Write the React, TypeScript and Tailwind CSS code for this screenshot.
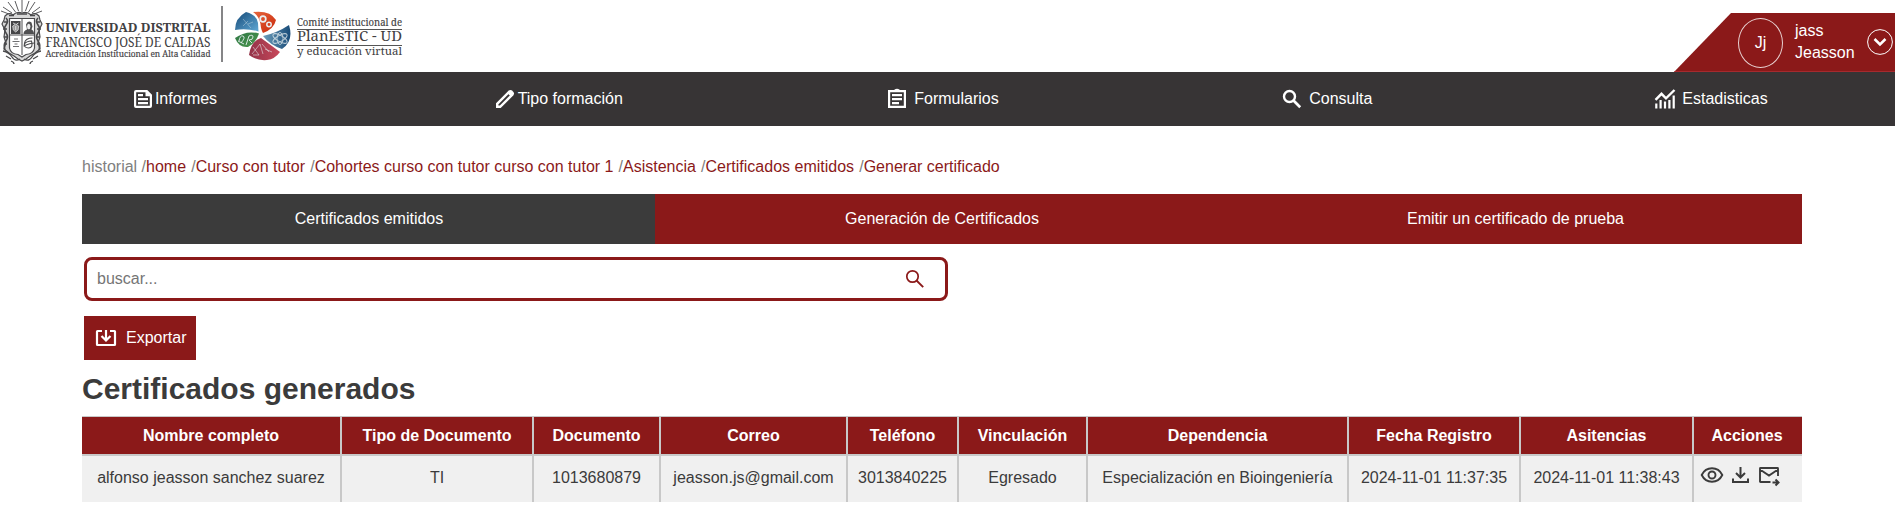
import React from 'react';

type IconProps = { className?: string; children: React.ReactNode };
const Icon = ({ className = 'size-6', children }: IconProps) => (
  <svg viewBox="0 0 24 24" className={`shrink-0 ${className}`} fill="none" stroke="currentColor" strokeWidth="2.2">
    {children}
  </svg>
);

const DocIcon = () => (
  <Icon><path d="M5 4.100h10.800l4.100 4.100V19a.9.9 0 0 1-.9.9H5a.9.9 0 0 1-.9-.9V5a.9.9 0 0 1 .9-.9zM7 8.100h5M7 12.100h10M7 16.100h10" /><path d="M14.500 4v5.200H20z" fill="currentColor" stroke="none" /></Icon>
);
const PencilIcon = () => (
  <Icon className="-ml-px mr-px size-6"><path d="M4.200 19.800v-3L16 5l3 3L7.200 19.800z" strokeWidth="2.400" /><path d="M14 5.700l2.500-2.400q1.300-.9 2.600.3l1.300 1.300q1.200 1.300.3 2.600L18.300 10z" fill="currentColor" stroke="none" /></Icon>
);
const ClipIcon = () => (
  <Icon className="-ml-px mr-px size-6"><path d="M4.100 4.100h15.800v15.800H4.100zM7 8.100h10M7 12.100h10M7 16.100h7" /><path d="M8.500 4.500a3.600 3.600 0 0 1 7 0z" fill="currentColor" stroke="none" /></Icon>
);
const SearchIcon = () => (
  <Icon className="-ml-px mr-px size-6"><circle cx="9.500" cy="9.500" r="5.500" strokeWidth="2.400" /><path d="M13.500 13.500l6.700 6.700" strokeWidth="2.700" /></Icon>
);
const ChartIcon = () => (
  <Icon className="-ml-px mr-px size-6"><path d="M3.300 21.500v-5M7.600 21.500v-8.500M12 21.500v-7M16.400 21.500v-8.500M20.700 21.500V8.500" strokeWidth="2.200" /><path d="M2.500 12.800l6-6 4.500 4.500L21.500 3" strokeWidth="2.400" /></Icon>
);

const nav = [
  { icon: <DocIcon />, label: 'Informes', gap: '' },
  { icon: <PencilIcon />, label: 'Tipo formación', gap: '' },
  { icon: <ClipIcon />, label: 'Formularios', gap: 'gap-1' },
  { icon: <SearchIcon />, label: 'Consulta', gap: 'gap-1' },
  { icon: <ChartIcon />, label: 'Estadisticas', gap: 'gap-1' },
];

const crumbs = ['home', 'Curso con tutor', 'Cohortes curso con tutor curso con tutor 1', 'Asistencia', 'Certificados emitidos', 'Generar certificado'];

const columns = [
  { title: 'Nombre completo', value: 'alfonso jeasson sanchez suarez' },
  { title: 'Tipo de Documento', value: 'TI' },
  { title: 'Documento', value: '1013680879' },
  { title: 'Correo', value: 'jeasson.js@gmail.com' },
  { title: 'Teléfono', value: '3013840225' },
  { title: 'Vinculación', value: 'Egresado' },
  { title: 'Dependencia', value: 'Especialización en Bioingeniería' },
  { title: 'Fecha Registro', value: '2024-11-01 11:37:35' },
  { title: 'Asitencias', value: '2024-11-01 11:38:43' },
];
const gridCols = 'grid grid-cols-[260px_192px_127px_187px_111px_129px_261px_172px_173px_108px]';

const Shield = () => (
  <svg viewBox="0 0 44 65" className="h-[65px] w-11 shrink-0" fill="none" stroke="#4a4a4c">
    <path d="M22 12V0M18.500 11L15 1M15.500 12L8 2M12 13L3 7M9 14L1 11M25.500 11L29 1M28.500 12L35 2M32 13L40 7M34 14L42 11" strokeWidth=".9" />
    <path d="M5 16q4-4 8-1q4-4 9-2q5-2 9 2q4-3 8 1l1 4 2 4-3 6 1 7-2 6 2 6-5 4-5 3-4 3-4 2-4-2-4-3-5-3-5-4 2-6-2-6 1-7-3-6 2-4z" strokeWidth="1.200" fill="#d8d8d8" />
    <path d="M6 18q3 3 0 7t0 8 0 8-1 9M38 18q-3 3 0 7t0 8 0 8 1 9M4 22h3M3 29h4M4 37h3M4 44h3M40 22h-3M41 29h-4M40 37h-3M40 44h-3M9 15.500h5M17 14h10M30 15.500h5" strokeWidth="1.600" />
    <path d="M9.500 18.500h25V48q-1 6-8.500 6.500l-4 2.500-4-2.500q-7.500-.5-8.500-6.500z" fill="#fff" strokeWidth="1.200" />
    <path d="M22 19v36M10 35h24" strokeWidth="1" />
    <path d="M11 21h9.500v13H11z" fill="#454547" stroke="none" />
    <path d="M15.700 24l3 2-.6 4-2.400 2-2.400-2-.6-4z" fill="#999" stroke="#ddd" strokeWidth=".8" />
    <path d="M13 23l2 1M18.500 23l-2 1M15.700 26v4" stroke="#eee" strokeWidth=".8" />
    <path d="M23.500 34q0-3.500 3.500-4.500l-1-5q2-5 5.500-2l1 4-1 3q2.500 1 2.500 4.500z" fill="#505052" stroke="none" />
    <ellipse cx="28.700" cy="26.500" rx="1.700" ry="2.700" fill="#eee" stroke="none" />
    <path d="M14 39h4M12.500 41.500h7M14.500 44h3M13 46.500h6" strokeWidth=".8" />
    <path d="M32.500 38q-7 0-8 5t4 5 3-7q-5 0-7.500 3.500M23.500 46q7-3 11-3" strokeWidth="1.100" />
    <path d="M3 51q6 1 9 6t8 2M41 51q-6 1-9 6t-8 2M6 56l5 3M38 56l-5 3M11 61q3 1 3 3M33 61q-3 1-3 3" strokeWidth="1.300" />
  </svg>
);

const PlanLogo = () => (
  <svg viewBox="0 0 58 50" className="h-[50px] w-[58px] shrink-0">
    <defs>
      <linearGradient id="blue" x2="1" y2="1"><stop stopColor="#164a78" /><stop offset="1" stopColor="#60a9d5" /></linearGradient>
      <linearGradient id="red" x2="1" y2="1"><stop stopColor="#e6673e" /><stop offset="1" stopColor="#c9290b" /></linearGradient>
      <linearGradient id="green" x2="1" y2="1"><stop stopColor="#2d7544" /><stop offset="1" stopColor="#4f9b50" /></linearGradient>
      <linearGradient id="wine" x2="1"><stop stopColor="#933348" /><stop offset="1" stopColor="#c8475a" /></linearGradient>
      <linearGradient id="navy" x2="1"><stop stopColor="#6d9ebb" /><stop offset="1" stopColor="#184b78" /></linearGradient>
    </defs>
    <path d="M12 1Q23 4 24 12L24.500 20.500Q13 17 1 19Q1 7 12 1z" fill="url(#blue)" />
    <path d="M19 1Q36-1 42 9Q40 18 29 22Q27 19 26.500 13Q25 5 19 1z" fill="url(#red)" />
    <path d="M1 27Q12 19 25 22.500Q22 32 14 36Q5 37 1 27z" fill="url(#green)" />
    <path d="M15 44Q17 30 27 27Q34 32 46 41Q41 48 33 49Q23 50 15 44z" fill="url(#wine)" />
    <path d="M29 25Q43 22 55 14Q60 30 48 38Q36 34 29 25z" fill="url(#navy)" />
    <g fill="none" stroke="#e9f0f2" strokeWidth=".9">
      <path d="M9 8l8 9M9 15l5-5M14 13l5-2" opacity=".4" />
      <circle cx="29" cy="8" r="2.800" strokeWidth="1.700" /><circle cx="35" cy="13.500" r="2.200" strokeWidth="1.500" />
      <path d="M5 30q1-6 4-5t-2 7M12 34l3-9q4-2 4 1t-4 3l3 3M4 30l6 3" />
      <path d="M18 43l8-10 3 10M28 33l7 8M19 36l6 8h-6M31 38l7 3" opacity=".6" />
      <g opacity=".75"><ellipse cx="46" cy="27.500" rx="8" ry="3" transform="rotate(30 46 27.500)" /><ellipse cx="46" cy="27.500" rx="8" ry="3" transform="rotate(-30 46 27.500)" /><ellipse cx="46" cy="27.500" rx="3" ry="6" /></g>
    </g>
  </svg>
);

const serif = "font-['Noto_Serif','DejaVu_Serif',serif]";

export default function App() {
  return (
    <div className="min-h-[510px] overflow-hidden bg-white font-['Liberation_Sans',Arial,sans-serif] text-base text-[#3b3b3b]">
      <header className="flex h-[72px] items-start justify-between">
        <div className="flex text-[#414042]">
          <Shield />
          <svg viewBox="0 0 169 50" className={`mt-[15px] h-[50px] w-[169px] overflow-visible ${serif}`} fill="#414042">
            <text x="1.500" y="16.800" fontSize="12.500" fontWeight="700" textLength="165" lengthAdjust="spacingAndGlyphs">UNIVERSIDAD DISTRITAL</text>
            <text x="1.500" y="31.700" fontSize="14" textLength="165" lengthAdjust="spacingAndGlyphs">FRANCISCO JOSÉ DE CALDAS</text>
            <text x="1.500" y="42.200" fontSize="8.800" stroke="#414042" strokeWidth=".15" textLength="165" lengthAdjust="spacingAndGlyphs">Acreditación Institucional en Alta Calidad</text>
          </svg>
          <div className="mt-[6px] ml-2 h-14 w-[2px] bg-[#858587]" />
          <div className="mt-[11px] ml-[11px]"><PlanLogo /></div>
          <svg viewBox="0 0 110 50" className={`mt-3 ml-[3px] h-[50px] w-[110px] overflow-visible ${serif}`} fill="#414042">
            <text x="2" y="14" fontSize="10" stroke="#414042" strokeWidth=".15" textLength="105" lengthAdjust="spacingAndGlyphs">Comité institucional de</text>
            <path d="M2 17.500h105M2 33.500h105" stroke="#555" strokeWidth="1" />
            <text x="2" y="29" fontSize="14.500" textLength="105" lengthAdjust="spacingAndGlyphs">PlanEsTIC - UD</text>
            <text x="2" y="42.500" fontSize="11.500" textLength="105" lengthAdjust="spacingAndGlyphs">y educación virtual</text>
          </svg>
        </div>
        <div className="mt-[13px] flex h-[59px] w-[221px] items-center border-b border-[#a52a2e] bg-[#8b1919] pl-[64px] text-white [clip-path:polygon(57px_0,100%_0,100%_100%,0_100%)]">
          <div className="mt-px flex h-[50px] w-[45px] shrink-0 items-center justify-center rounded-[50%] border border-white/80">Jj</div>
          <div className="ml-3 w-[60px] leading-[22px]">jass<br />Jeasson</div>
          <svg viewBox="0 0 26 26" className="ml-3 size-[26px] shrink-0" fill="none" stroke="#fff"><circle cx="13" cy="13" r="12.400" strokeWidth="1" /><path d="M7.500 10l5.500 5.500L18.500 10" strokeWidth="2.500" /></svg>
        </div>
      </header>

      <nav className="flex h-[54px] items-center justify-between bg-[#373435] pr-[119px] pl-[109px] text-white">
        {nav.map((n) => (
          <a key={n.label} className={`flex w-[130px] items-center justify-center whitespace-nowrap ${n.gap}`}>
            {n.icon}<span>{n.label}</span>
          </a>
        ))}
      </nav>

      <main className="w-[1802px] pl-[82px]">
        <div className="h-[68px] pt-[29px] leading-6 text-[#808080]">
          historial {crumbs.map((c) => <span key={c} className="mr-[0.7px]">/<span className="text-[#8b1919]">{c}</span> </span>)}
        </div>

        <div className="grid h-[50px] grid-cols-[573px_573px_574px] items-stretch text-white">
          {['Certificados emitidos', 'Generación de Certificados', 'Emitir un certificado de prueba'].map((t, i) => (
            <button key={t} className={i === 0 ? 'bg-[#3b3b3b] pl-px' : 'bg-[#8b1919] pl-px'}>{t}</button>
          ))}
        </div>

        <div className="mt-[13px] ml-[2px] flex h-11 w-[864px] items-center justify-between rounded-lg border-3 border-[#8b1919] pr-[18px] pl-[10px] text-[#757575]">
          <span>buscar...</span>
          <svg viewBox="0 0 24 24" className="size-6" fill="none" stroke="#8b1919"><circle cx="9.500" cy="9.500" r="5.700" strokeWidth="1.700" /><path d="M13.500 13.500l6.700 6.700" strokeWidth="1.900" /></svg>
        </div>

        <button className="mt-[15px] ml-[2px] flex h-11 w-[112px] items-center bg-[#8b1919] pl-[10px] text-white">
          <Icon><path d="M8 5H3.500q-.5 0-.5.500v13q0 .5.500.5h17q.5 0 .5-.5v-13q0-.5-.5-.5H16M12 4v10M7.500 10L12 14.500l4.500-4.500" strokeWidth="2.200" /></Icon>
          <span className="ml-2">Exportar</span>
        </button>

        <h1 className="mt-[11px] h-[45px] text-[30px] leading-9 font-bold">Certificados generados</h1>

        <div className="border-t border-[#c8c8c8] text-center whitespace-nowrap">
          <div className={`${gridCols} h-[39px] border-b-2 border-[#c8c8c8] bg-[#8b1919] leading-[37px] font-bold text-white`}>
            {columns.map((c) => <div key={c.title} className="border-r-2 border-[#c8c8c8]">{c.title}</div>)}
            <div className="pr-[2px]">Acciones</div>
          </div>
          <div className={`${gridCols} h-[46px] bg-[#f0f0f0] leading-[43px]`}>
            {columns.map((c) => <div key={c.title} className="border-r-2 border-[#c8c8c8]">{c.value}</div>)}
            <div className="flex items-start gap-1 pt-[7px] pl-[6px]">
              <Icon><path d="M1.700 12Q5 5.300 12 5.300T22.300 12Q19 18.700 12 18.700T1.700 12z" strokeWidth="1.900" /><circle cx="12" cy="12" r="3.500" strokeWidth="1.900" /></Icon>
              <Icon><path d="M12.500 4v10M8 10l4.500 4.500L17 10M5 15.500V19h15v-3.500" strokeWidth="2" /></Icon>
              <Icon className="ml-px size-6"><path d="M13.500 19H3.500q-.5 0-.5-.5v-13q0-.5.500-.5h17q.5 0 .5.500V13M3 6.500l9 6 9-6" strokeWidth="1.900" /><path d="M15.500 19.500h6M18.500 16.500l3 3-3 3" strokeWidth="2" /></Icon>
            </div>
          </div>
        </div>
      </main>
    </div>
  );
}
